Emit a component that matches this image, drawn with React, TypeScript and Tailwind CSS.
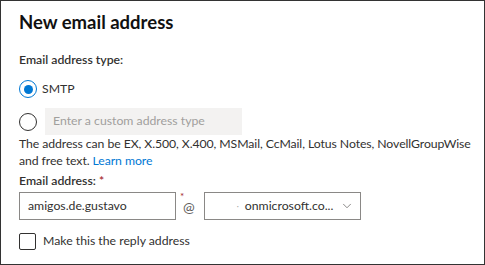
import { ChevronDown } from "lucide-react";

const font = "font-['Lato','Noto_Sans',sans-serif]";

const App = () => {
  return (
    <div
      className={`${font} box-border flex h-[265px] w-[485px] flex-col border border-[#333333] bg-white pl-[18px] pr-[8px] pt-[9px] text-[12.25px] text-[#323130]`}
    >
      <h1 className="text-[18.5px] font-bold leading-[24px] text-[#111111]">
        New email address
      </h1>

      <p className="mt-[16px] font-semibold leading-[20px]">Email address type:</p>

      {/* SMTP (selected) */}
      <label className="mt-[9px] flex h-[20px] items-center gap-[5px]">
        <span className="flex h-[18px] w-[18px] items-center justify-center rounded-full border border-[#0078d4]">
          <span className="h-[9px] w-[9px] rounded-full bg-[#0078d4]" />
        </span>
        SMTP
      </label>

      {/* custom type */}
      <div className="mt-[9px] flex items-center gap-[8px]">
        <span className="h-[18px] w-[18px] rounded-full border border-[#323130]" />
        <div className="flex h-[27px] w-[197px] items-center bg-[#f3f2f1] px-[8px] text-[#a19f9d]">
          Enter a custom address type
        </div>
      </div>

      <p className="mt-0 leading-[17px] tracking-[-0.08px]">
        The address can be EX, X.500, X.400, MSMail, CcMail, Lotus Notes,
        NovellGroupWise and free text.{" "}
        <a className="text-[#0078d4]">Learn more</a>
      </p>

      <p className="mt-[3px] font-semibold leading-[18px]">
        Email address: <span className="text-[#a4262c]">*</span>
      </p>

      <div className="mt-[2px] flex items-center">
        <div className="flex h-[28px] w-[157px] items-center border border-[#8a8886] px-[8px]">
          amigos.de.gustavo
        </div>
        <span className="relative ml-[7px] text-[14px] text-[#605e5c]">
          <span className="absolute -left-[3px] -top-[7px] text-[10px] text-[#a4262c]">
            *
          </span>
          @
        </span>
        <div className="ml-[9px] flex h-[28px] w-[157px] items-center border border-[#8a8886] pl-[10px] pr-[6px]">
          <span className="w-[22px]" />
          <span className="text-[8px] text-[#a19f9d]">·</span>
          <span className="ml-[6px] flex-1 whitespace-nowrap">onmicrosoft.co...</span>
          <ChevronDown size={14} strokeWidth={1.25} className="text-[#605e5c]" />
        </div>
      </div>

      <label className="mt-[12px] flex items-center gap-[7px]">
        <span className="h-[17px] w-[17px] rounded-[2px] border border-[#323130]" />
        Make this the reply address
      </label>
    </div>
  );
};

export default App;
